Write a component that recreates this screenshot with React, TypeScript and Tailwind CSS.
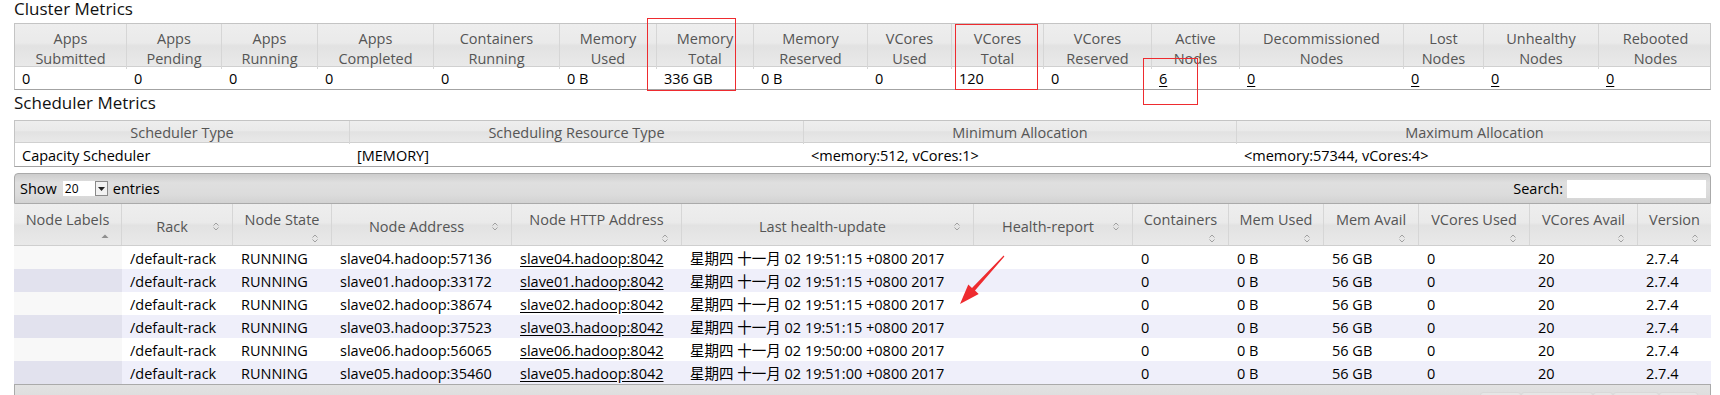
import React from "react";

const clusterCols = [
  ["Apps", "Submitted", "0"],
  ["Apps", "Pending", "0"],
  ["Apps", "Running", "0"],
  ["Apps", "Completed", "0"],
  ["Containers", "Running", "0"],
  ["Memory", "Used", "0 B"],
  ["Memory", "Total", "336 GB"],
  ["Memory", "Reserved", "0 B"],
  ["VCores", "Used", "0"],
  ["VCores", "Total", "120"],
  ["VCores", "Reserved", "0"],
  ["Active", "Nodes", "6"],
  ["Decommissioned", "Nodes", "0"],
  ["Lost", "Nodes", "0"],
  ["Unhealthy", "Nodes", "0"],
  ["Rebooted", "Nodes", "0"],
];

const nodeHeaders: { label: string; twoLine: boolean; sorted?: boolean }[] = [
  { label: "Node Labels", twoLine: true, sorted: true },
  { label: "Rack", twoLine: false },
  { label: "Node State", twoLine: true },
  { label: "Node Address", twoLine: false },
  { label: "Node HTTP Address", twoLine: true },
  { label: "Last health-update", twoLine: false },
  { label: "Health-report", twoLine: false },
  { label: "Containers", twoLine: true },
  { label: "Mem Used", twoLine: true },
  { label: "Mem Avail", twoLine: true },
  { label: "VCores Used", twoLine: true },
  { label: "VCores Avail", twoLine: true },
  { label: "Version", twoLine: true },
];

const nodes = [
  ["slave04", "57136", "19:51:15"],
  ["slave01", "33172", "19:51:15"],
  ["slave02", "38674", "19:51:15"],
  ["slave03", "37523", "19:51:15"],
  ["slave06", "56065", "19:50:00"],
  ["slave05", "35460", "19:51:00"],
];

const headerBg =
  "bg-[linear-gradient(to_bottom,#eeeeee_0%,#eaeaea_45%,#e2e2e2_52%,#e9e9e9_100%)]";

function SortIcon() {
  return (
    <svg width="8" height="11" viewBox="0 0 8 11" className="shrink-0">
      <path d="M1.5 4.5 L4 2 L6.5 4.5" fill="none" stroke="#a0a0a0" strokeWidth="1" />
      <path d="M1.5 6.5 L4 9 L6.5 6.5" fill="none" stroke="#a0a0a0" strokeWidth="1" />
    </svg>
  );
}

function SortedIcon() {
  return (
    <svg width="8" height="6" viewBox="0 0 8 6" className="shrink-0">
      <path d="M0.5 5 L4 1.5 L7.5 5 Z" fill="#8f8f8f" />
    </svg>
  );
}

export default function App() {
  return (
    <div className="relative h-[395px] w-[1720px] overflow-hidden bg-white pl-[14px] font-['Open_Sans','Noto_Sans_CJK_SC',sans-serif] text-[14.5px] text-black">
      {/* Cluster Metrics */}
      <div className="h-[23px] text-[17px] leading-[18px] text-[#111]">Cluster Metrics</div>
      <div className="w-[1697px] border border-[#c4c4c4] border-b-[#a3a3a3]">
        <div className={`grid h-[43px] grid-cols-[112px_95px_96px_116px_126px_97px_97px_114px_84px_92px_108px_88px_164px_80px_115px_113px] border-b border-[#d0d0d0] ${headerBg}`}>
          {clusterCols.map((c, i) => (
            <div
              key={i}
              className="flex flex-col items-center justify-center border-r border-[#d6d6d6] pt-[5px] text-center leading-[20px] text-[#555] last:border-r-0"
            >
              <span>{c[0]}</span>
              <span>{c[1]}</span>
            </div>
          ))}
        </div>
        <div className="grid h-[22px] grid-cols-[112px_95px_96px_116px_126px_97px_97px_114px_84px_92px_108px_88px_164px_80px_115px_113px]">
          {clusterCols.map((c, i) => (
            <div key={i} className="pl-[7px] pt-[2px] leading-[20px]">
              {i >= 11 ? <span className="underline underline-offset-2">{c[2]}</span> : c[2]}
            </div>
          ))}
        </div>
      </div>

      {/* Scheduler Metrics */}
      <div className="h-[30px] text-[17px] leading-[26px] text-[#111]">Scheduler Metrics</div>
      <div className="w-[1697px] border border-[#c4c4c4] border-b-[#a3a3a3]">
        <div className={`grid h-[22px] grid-cols-[335px_454px_433px_475px] border-b border-[#d0d0d0] ${headerBg}`}>
          {["Scheduler Type", "Scheduling Resource Type", "Minimum Allocation", "Maximum Allocation"].map((h) => (
            <div key={h} className="border-r border-[#d6d6d6] pt-[1px] text-center leading-[22px] text-[#555] last:border-r-0">
              {h}
            </div>
          ))}
        </div>
        <div className="grid h-[23px] grid-cols-[335px_454px_433px_475px]">
          {["Capacity Scheduler", "[MEMORY]", "<memory:512, vCores:1>", "<memory:57344, vCores:4>"].map((v) => (
            <div key={v} className="pl-[7px] pt-[2px] leading-[21px]">
              {v}
            </div>
          ))}
        </div>
      </div>

      {/* Nodes table */}
      <div className="mt-[6px] w-[1697px]">
        <div className="flex h-[31px] items-center justify-between rounded-t-[4px] border border-[#aaaaaa] bg-[linear-gradient(to_bottom,#cdcdcd_0%,#dfdfdf_30%,#dcdcdc_70%,#d2d2d2_100%)] pl-[5px] pr-[4px]">
          <div className="flex items-center">
            <span>Show</span>
            <div className="ml-[6px] flex h-[15px] items-center bg-white">
              <span className="w-[32px] pl-[2px] text-[12px] leading-[15px]">20</span>
              <span className="flex h-[15px] w-[13px] items-center justify-center border border-[#8a8a8a] bg-[#f2f2f2]">
                <svg width="7" height="4" viewBox="0 0 7 4">
                  <path d="M0 0 L7 0 L3.5 4 Z" fill="#222" />
                </svg>
              </span>
            </div>
            <span className="ml-[5px]">entries</span>
          </div>
          <div className="flex items-center">
            <span>Search:</span>
            <div className="ml-[4px] h-[18px] w-[139px] bg-white" />
          </div>
        </div>
        <div className={`grid h-[42px] grid-cols-[108px_111px_99px_180px_170px_292px_159px_96px_95px_95px_111px_108px_73px] border-b border-[#cfcfcf] ${headerBg}`}>
          {nodeHeaders.map((h) =>
            h.twoLine ? (
              <div key={h.label} className="flex flex-col border-r border-[#d6d6d6] px-[8px] pt-[6px] text-[#555] last:border-r-0">
                <span className="text-center leading-[20px] whitespace-nowrap">{h.label}</span>
                <span className="mt-[3px] flex justify-end pr-[4px]">{h.sorted ? <SortedIcon /> : <SortIcon />}</span>
              </div>
            ) : (
              <div key={h.label} className="flex items-center border-r border-[#d6d6d6] pl-[10px] pr-[12px] pt-[4px] text-[#555] last:border-r-0">
                <span className="flex-1 text-center leading-[20px] whitespace-nowrap">{h.label}</span>
                <SortIcon />
              </div>
            )
          )}
        </div>
        {nodes.map((n, i) => {
          const even = i % 2 === 1;
          const cells = [
            "",
            "/default-rack",
            "RUNNING",
            `${n[0]}.hadoop:${n[1]}`,
            `${n[0]}.hadoop:8042`,
            `星期四 十一月 02 ${n[2]} +0800 2017`,
            "",
            "0",
            "0 B",
            "56 GB",
            "0",
            "20",
            "2.7.4",
          ];
          return (
            <div
              key={n[0]}
              className={`grid h-[23px] grid-cols-[108px_111px_99px_180px_170px_292px_159px_96px_95px_95px_111px_108px_73px] ${even ? "bg-[#efeffa]" : "bg-white"}`}
            >
              {cells.map((c, j) => (
                <div
                  key={j}
                  className={`whitespace-nowrap pl-[8px] pt-[2px] leading-[21px] ${j === 0 ? (even ? "bg-[#e2e2ee]" : "bg-[#f8f8f8]") : ""}`}
                >
                  {j === 4 ? <span className="underline underline-offset-2">{c}</span> : c}
                </div>
              ))}
            </div>
          );
        })}
        <div className="flex h-[30px] justify-end border border-[#aaaaaa] bg-[linear-gradient(to_bottom,#e2e2e2,#d8d8d8)] pr-[12px] pt-[7px]">
          {[41, 72, 20, 46, 39].map((w, k) => (
            <div key={k} style={{ width: w }} className="h-[20px] rounded-[3px] border border-[#d9d9d9] bg-[#e6e6e6]" />
          ))}
        </div>
      </div>

      {/* Annotations */}
      <div className="pointer-events-none absolute left-[647px] top-[18px] h-[73px] w-[89px] border-[1.5px] border-[#ee2b2f]" />
      <div className="pointer-events-none absolute left-[955px] top-[24px] h-[66px] w-[83px] border-[1.5px] border-[#ee2b2f]" />
      <div className="pointer-events-none absolute left-[1143px] top-[58px] h-[47px] w-[55px] border-[1.5px] border-[#ee2b2f]" />
      <svg className="pointer-events-none absolute left-0 top-0" width="1720" height="395" viewBox="0 0 1720 395">
        <polygon
          points="960,304 968.3,284.5 972,287.9 1003.6,255.6 1004.4,256.4 975,290.6 978.7,293.9"
          fill="#ee2b2f"
        />
      </svg>
    </div>
  );
}
